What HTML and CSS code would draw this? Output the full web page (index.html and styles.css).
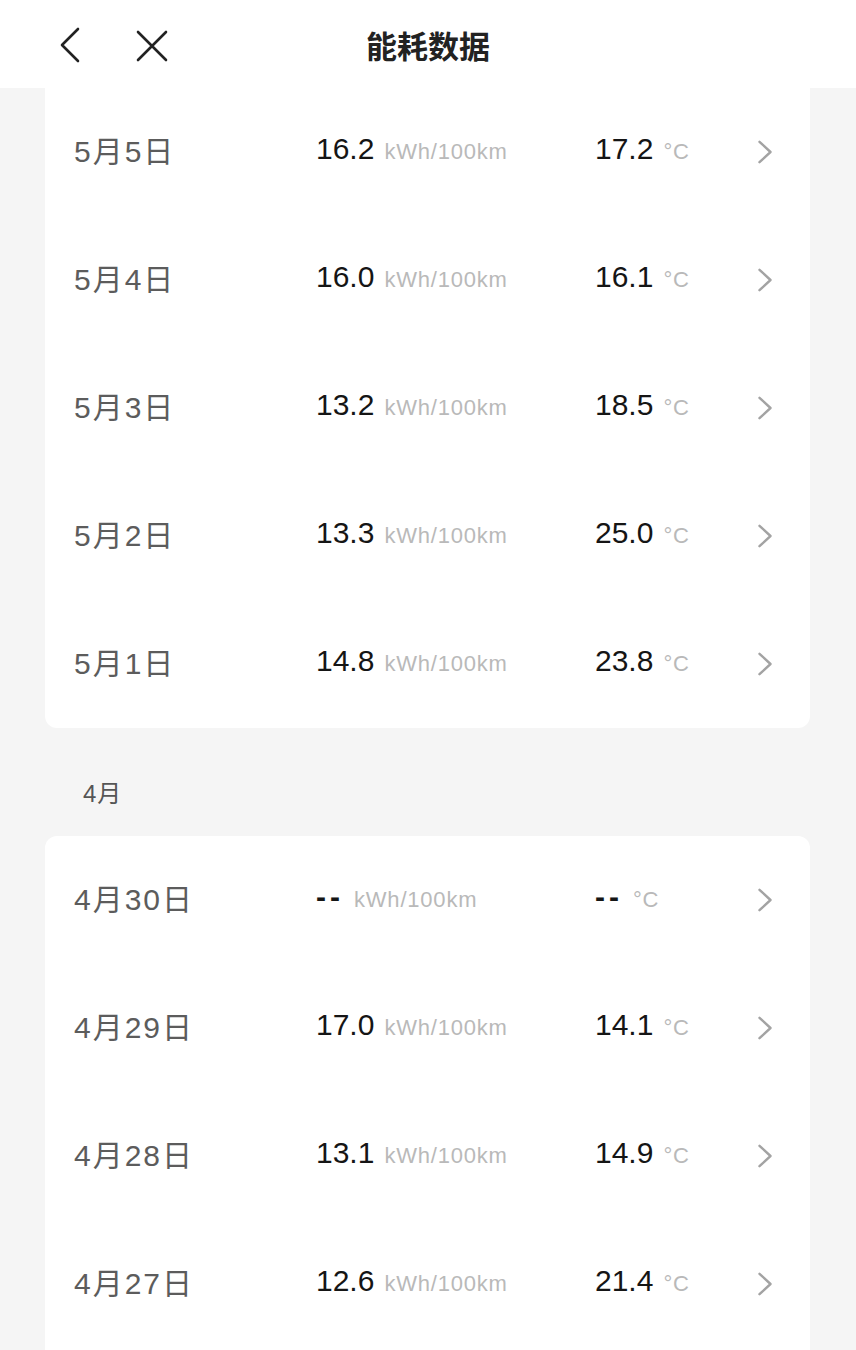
FILE: index.html
```html
<!DOCTYPE html>
<html lang="zh-CN">
<head>
    <meta charset="UTF-8">
    <meta name="viewport" content="width=device-width, initial-scale=1.0">
    <title>能耗数据</title>
    <link rel="stylesheet" href="styles.css">
</head>
<body>
    <!-- Top bar -->
    <header class="top-bar">
        <div class="top-bar-icons">
            <svg class="icon-back" width="24" height="36" viewBox="0 0 24 36">
                <path d="M20 2 L4 18 L20 34" fill="none" stroke="#222" stroke-width="2.6" stroke-linecap="round" stroke-linejoin="round"/>
            </svg>
            <svg class="icon-close" width="34" height="34" viewBox="0 0 34 34">
                <path d="M3 3 L31 31 M31 3 L3 31" fill="none" stroke="#222" stroke-width="2.6" stroke-linecap="round"/>
            </svg>
        </div>
        <h1 class="top-bar-title">能耗数据</h1>
    </header>

    <main class="content">
        <!-- May (scrolled) -->
        <section class="day-card day-card-cut" id="may-card"></section>

        <div class="month-label">4月</div>

        <!-- April -->
        <section class="day-card" id="april-card"></section>
    </main>

    <script>
        const may = [
            ["5月5日", "16.2", "17.2"],
            ["5月4日", "16.0", "16.1"],
            ["5月3日", "13.2", "18.5"],
            ["5月2日", "13.3", "25.0"],
            ["5月1日", "14.8", "23.8"],
        ];

        const april = [
            ["4月30日", "--", "--"],
            ["4月29日", "17.0", "14.1"],
            ["4月28日", "13.1", "14.9"],
            ["4月27日", "12.6", "21.4"],
            ["4月26日", "13.9", "20.2"],
        ];

        function valueHtml(value, unit) {
            const empty = value === "--" ? " day-value-empty" : "";
            return `<span class="day-value"><span class="day-number${empty}">${value}</span><span class="day-unit">${unit}</span></span>`;
        }

        function fillCard(card, days) {
            days.forEach(([date, energy, temp]) => {
                const row = document.createElement("div");
                row.classList.add("day-row");
                row.innerHTML = `
                    <span class="day-date">${date}</span>
                    ${valueHtml(energy, "kWh/100km")}
                    ${valueHtml(temp, "°C")}
                    <svg class="day-arrow" width="16" height="24" viewBox="0 0 16 24">
                        <path d="M2.5 1.8 L13.5 12 L2.5 22.2" fill="none" stroke="#a3a3a3" stroke-width="2.4" stroke-linecap="round" stroke-linejoin="round"/>
                    </svg>
                `;
                card.appendChild(row);
            });
        }

        fillCard(document.getElementById("may-card"), may);
        fillCard(document.getElementById("april-card"), april);
    </script>
</body>
</html>
```

FILE: styles.css
```css
/* General */
body, html {
    margin: 0;
    padding: 0;
    background-color: #f5f5f5;
    font-family: "Liberation Sans", "Noto Sans CJK SC", sans-serif;
}
body {
    height: 1350px;
    overflow: hidden;
}

/* Top bar */
.top-bar {
    position: relative;
    height: 88px;
    background: #fff;
    display: flex;
    align-items: center;
    justify-content: center;
}
.top-bar-icons {
    position: absolute;
    left: 58px;
    top: 27px;
    display: flex;
    align-items: center;
    gap: 53px;
}
.icon-close {
    margin-top: 1px;
}
.top-bar-title {
    margin: 0;
    font-size: 31px;
    font-weight: 700;
    color: #222;
    font-family: "Noto Sans CJK SC", sans-serif;
}

/* Cards */
.content {
    padding: 0 46px 0 45px;
}
.day-card {
    background: #fff;
    border-radius: 12px;
}
.day-card-cut {
    border-top-left-radius: 0;
    border-top-right-radius: 0;
}
.day-row {
    height: 128px;
    display: grid;
    grid-template-columns: 242px 279px 1fr auto;
    align-items: center;
    padding: 0 37px 0 29px;
}
.day-date {
    font-size: 30px;
    letter-spacing: 2px;
    color: #5c5c5c;
    margin-bottom: 6px;
}
.day-value {
    font-size: 30px;
    color: #151515;
    margin-bottom: 6px;
}
.day-value-empty {
    font-weight: 700;
    letter-spacing: 4px;
}
.day-unit {
    font-size: 22px;
    letter-spacing: 0.8px;
    color: #b9b9b9;
    margin-left: 10px;
}
.day-arrow {
    display: block;
}

/* Month label */
.month-label {
    padding: 51px 0 27px 38px;
    line-height: 30px;
    font-size: 24px;
    letter-spacing: 1px;
    color: #555;
}
```
